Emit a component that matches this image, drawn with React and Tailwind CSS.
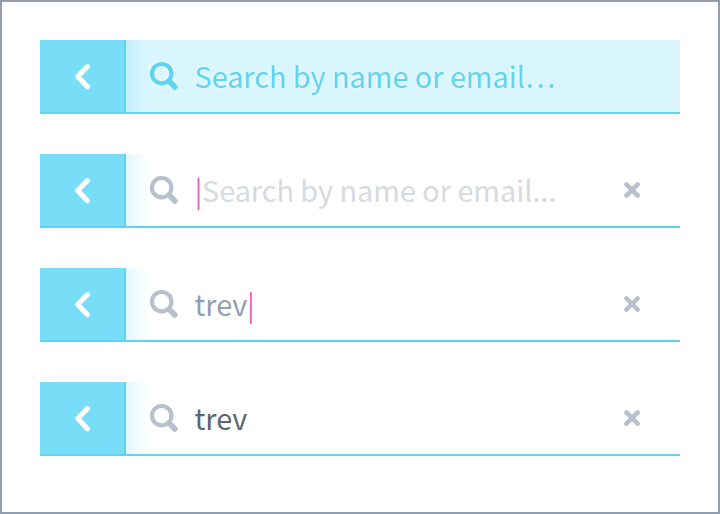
function BackButton() {
  return (
    <button className="flex w-[86px] shrink-0 items-center border-r-2 border-[#60d3ef] bg-[#78ddf7] pl-[33px]" aria-label="Back">
      <svg width="20" height="30" viewBox="0 0 20 30" fill="none" stroke="#fff" strokeWidth="5" strokeLinecap="round" strokeLinejoin="round">
        <path d="M14.5 5.6 4.7 15.6l9.8 10.1" />
      </svg>
    </button>
  );
}

function SearchIcon({ color, glow }) {
  return (
    <svg
      width="30"
      height="30"
      viewBox="0 0 30 30"
      fill="none"
      stroke={color}
      strokeLinecap="round"
      className={"mt-[21px] shrink-0 overflow-visible " + (glow ? "drop-shadow-[0_0_2px_rgba(255,255,255,0.9)]" : "")}
    >
      <circle cx="12.7" cy="12.7" r="9.7" strokeWidth="4.2" />
      <path d="M19.6 19.6 21.3 21.3" strokeWidth="4" />
      <path d="M22 22 25.8 26" strokeWidth="5.8" />
    </svg>
  );
}

function ClearIcon() {
  return (
    <button className="mt-[26px] mr-[38px] ml-auto h-5 w-5 shrink-0" aria-label="Clear">
      <svg width="20" height="20" viewBox="0 0 20 20" stroke="#b7c0cd" strokeWidth="4.6" strokeLinecap="round">
        <path d="M4.4 4.4 15.7 15.7M15.7 4.4 4.4 15.7" />
      </svg>
    </button>
  );
}

function SearchBar({ active, children }) {
  return (
    <div className={"flex h-[74px] border-b-2 border-[#60d3ef] " + (active ? "bg-[#d9f6ff]" : "bg-white")}>
      <BackButton />
      <div
        className={
          "w-[23px] shrink-0 bg-linear-to-r " +
          (active ? "from-[#c6f0fc] to-[#d9f6ff]" : "from-[#e2f8fe] to-white")
        }
      />
      <SearchIcon color={active ? "#60d3ef" : "#b7c0cd"} glow={active} />
      <div className="ml-[15px] flex pt-[14px] font-['Noto_Sans_CJK_SC',sans-serif] text-[28.8px] leading-[44px] whitespace-pre">
        {children}
      </div>
      {!active && <ClearIcon />}
    </div>
  );
}

export default function App() {
  return (
    <main className="flex h-[514px] w-[720px] flex-col gap-10 border-2 border-[#929eaf] bg-white p-[38px]">
      <SearchBar active>
        <span className="pl-[0.5px] text-[#60d3ef] [text-shadow:0_0_3px_#fff]">Search by name or email…</span>
      </SearchBar>
      <SearchBar>
        <span className="mt-[10px] ml-[3px] h-8 w-[3px] border-x border-[#fcc4e3] bg-[#ef55ac]" />
        <span className="ml-[2px] text-[#d7dae0]">Search by name or email...</span>
      </SearchBar>
      <SearchBar>
        <span className="w-[56px] pl-[0.5px] text-[#929db0]">trev</span>
        <span className="mt-[10px] h-8 w-[2px] border-r border-[#ff7cc2] bg-[#f55fb2]" />
      </SearchBar>
      <SearchBar>
        <span className="pl-[0.5px] text-[#5b6576]">trev</span>
      </SearchBar>
    </main>
  );
}
